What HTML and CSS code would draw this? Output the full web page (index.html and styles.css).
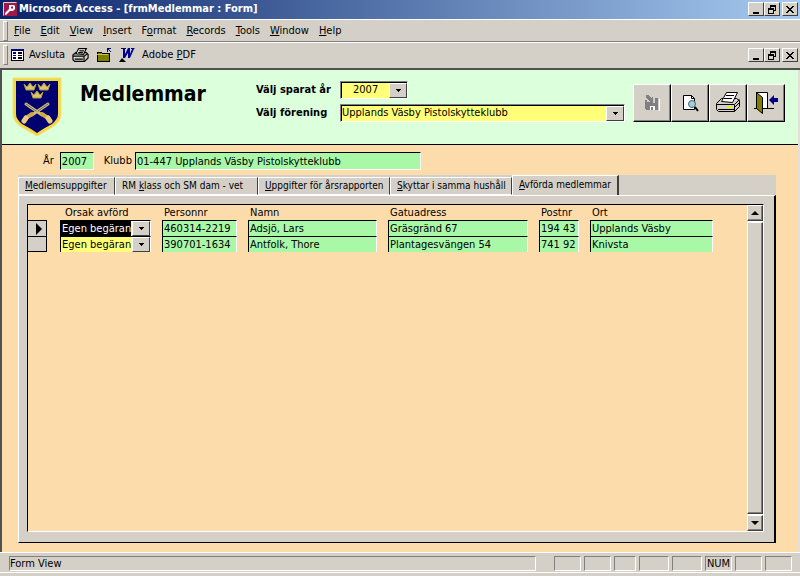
FILE: index.html
```html
<!DOCTYPE html>
<html lang="sv">
<head>
    <meta charset="UTF-8">
    <meta name="viewport" content="width=device-width, initial-scale=1.0">
    <title>Microsoft Access - [frmMedlemmar : Form]</title>
    <link rel="stylesheet" href="styles.css">
</head>
<body>
    <header class="titlebar">
        <svg class="app-icon" width="14" height="14" viewBox="0 0 14 14">
            <rect width="14" height="14" fill="#a01848"/>
            <path d="M.5 13.500V.5h13" fill="none" stroke="#e8c8d4"/>
            <path d="M6 3h5l1 1v3l-2 2H7l-4 4H2v-2l4-4z" fill="#fff"/>
            <path d="M8 4.500h2v2H8z" fill="#a01848"/>
        </svg>
        <span class="title">Microsoft Access - [frmMedlemmar : Form]</span>
        <div class="window-buttons">
            <button type="button" aria-label="Minimize"><svg width="10" height="9" viewBox="0 0 10 9" shape-rendering="crispEdges"><path d="M2 7h6v2H2z"/></svg></button>
            <button type="button" aria-label="Restore"><svg width="10" height="9" viewBox="0 0 10 9" shape-rendering="crispEdges"><path d="M3 0h6v6H7V5h1V2H4v1H3zM1 3h6v6H1zM2 5v3h4V5z" fill-rule="evenodd"/></svg></button>
            <button type="button" class="close" aria-label="Close"><svg width="10" height="9" viewBox="0 0 10 9" shape-rendering="crispEdges"><path d="M1 1h2v1h1v1h2V2h1V1h2v1H8v1H7v1H6v1h1v1h1v1h1v1H7V7H6V6H4v1H3v1H1V7h1V6h1V5h1V4H3V3H2V2H1z"/></svg></button>
        </div>
    </header>

    <nav class="bar menubar">
        <button type="button"><u>F</u>ile</button>
        <button type="button"><u>E</u>dit</button>
        <button type="button"><u>V</u>iew</button>
        <button type="button"><u>I</u>nsert</button>
        <button type="button">F<u>o</u>rmat</button>
        <button type="button"><u>R</u>ecords</button>
        <button type="button"><u>T</u>ools</button>
        <button type="button"><u>W</u>indow</button>
        <button type="button"><u>H</u>elp</button>
    </nav>

    <div class="bar toolbar">
        <button type="button">
            <svg width="13" height="12" viewBox="0 0 13 12" shape-rendering="crispEdges">
                <path d="M0 0h13v12H0z" fill="#000"/><path d="M0 0h13v2H0z" fill="#000080"/><path d="M1 2h11v9H1z" fill="#fff"/>
                <path d="M2 3h3v2H2zM2 6h3v1H2zM2 8h3v2H2z" fill="#000080"/><path d="M7 3h4v2H7zM7 6h4v1H7zM7 8h4v2H7z"/>
            </svg>
            Avsluta
        </button>
        <button type="button" aria-label="Skriv ut">
            <svg width="17" height="14" viewBox="0 0 28 24">
                <path d="M1 12l5-4h18l3 3v6l-6 6H4l-3-3z" fill="#d4d0c8" stroke="#000" stroke-width="2"/>
                <path d="M6 10l5-9h13l-5 10z" fill="#fff" stroke="#000" stroke-width="2"/>
                <path d="M12 5h8M10 8h8M1 14h19l6-4M20 14v8M4 19h14" fill="none" stroke="#000" stroke-width="2"/>
            </svg>
        </button>
        <button type="button" aria-label="Mapp">
            <svg width="16" height="16" viewBox="0 0 16 16" shape-rendering="crispEdges">
                <path d="M1 14V6l1-1h3l1 1h7v8z" fill="#808000" stroke="#000"/>
                <path d="M1 7h11" stroke="#c8c840"/><path d="M11 1h4v1h-2v1h1v1h1v1h-1V4h-1V3h-1v2h-1z" fill="#000080"/>
            </svg>
        </button>
        <button type="button" aria-label="Word">
            <svg width="16" height="16" viewBox="0 0 16 16">
                <path d="M2 1h5v1H6v5l3-6h2v6l2-5h-1V1h4l-1 1-4 9H9V6l-3 5H4V2H2z" fill="#000090"/>
                <path d="M0 15l3-4 4 4z"/>
            </svg>
        </button>
        <button type="button" class="pdf">Adobe <u>P</u>DF</button>
        <div class="window-buttons">
            <button type="button" aria-label="Minimize form"><svg width="10" height="9" viewBox="0 0 10 9" shape-rendering="crispEdges"><path d="M2 7h6v2H2z"/></svg></button>
            <button type="button" aria-label="Restore form"><svg width="10" height="9" viewBox="0 0 10 9" shape-rendering="crispEdges"><path d="M3 0h6v6H7V5h1V2H4v1H3zM1 3h6v6H1zM2 5v3h4V5z" fill-rule="evenodd"/></svg></button>
            <button type="button" class="close" aria-label="Close form"><svg width="10" height="9" viewBox="0 0 10 9" shape-rendering="crispEdges"><path d="M1 1h2v1h1v1h2V2h1V1h2v1H8v1H7v1H6v1h1v1h1v1h1v1H7V7H6V6H4v1H3v1H1V7h1V6h1V5h1V4H3V3H2V2H1z"/></svg></button>
        </div>
    </div>

    <main class="form">
        <section class="form-header">
            <svg class="crest" width="50" height="60" viewBox="0 0 50 60">
                <path d="M1 1h48v36q0 7-7 12l-10 6-7 4-7-4-10-6q-7-5-7-12z" fill="#f4d83c" stroke="#f0e080"/>
                <path d="M4 4h42v33q0 5-6 10l-9 5-6 4-6-4-9-5q-6-5-6-10z" fill="#000070"/>
                <g fill="#dcc46c" stroke="#b09840" stroke-width="1">
                    <path d="M12 7l3 3 3-4 3 4 3-3-2 6h-8z"/>
                    <path d="M26 7l3 3 3-4 3 4 3-3-2 6h-8z"/>
                    <path d="M19 15l3 3 3-4 3 4 3-3-2 6h-8z"/>
                </g>
                <g stroke-linecap="round">
                    <path d="M14 27l16 11M36 27L20 38" stroke="#d0c080" stroke-width="3"/>
                    <path d="M14 27l10 7M36 27l-10 7" stroke="#706838" stroke-width="1"/>
                    <path d="M30 37l6 4M20 37l-6 4" stroke="#d0a848" stroke-width="4"/>
                    <path d="M36 41l2 3M14 41l-2 3" stroke="#e8cc80" stroke-width="5"/>
                </g>
            </svg>
            <h1>Medlemmar</h1>
            <div class="filters">
                <label for="year">Välj sparat år</label>
                <span class="combo combo-year"><select id="year"><option>2007</option></select></span>
                <label for="club">Välj förening</label>
                <span class="combo"><select id="club"><option>Upplands Väsby Pistolskytteklubb</option></select></span>
            </div>
            <div class="actions">
                <button type="button" aria-label="Spara" disabled>
                    <svg width="16" height="16" viewBox="0 0 16 16" shape-rendering="crispEdges">
                        <path d="M15 4v12H3" fill="none" stroke="#fff"/>
                        <path d="M1 5h2v3h8V3h3v12H2l-1-1z" fill="#808080"/>
                        <path d="M2 0h2l4 4V2h1v6H3V7h3L2 3z" fill="#808080"/>
                        <path d="M6 11h5v4H6z" fill="#fff"/><path d="M7 12h2v3H7z" fill="#808080"/>
                    </svg>
                </button>
                <button type="button" aria-label="Förhandsgranska">
                    <svg width="18" height="18" viewBox="0 0 18 18">
                        <path d="M2.500 1.500h8l3 3v11h-11z" fill="#fff" stroke="#000"/><path d="M10.500 1.500v3h3" fill="none" stroke="#000"/>
                        <circle cx="11" cy="10" r="3.500" fill="#a0d0e0" stroke="#506070"/><path d="M14 13l3 4" stroke="#000" stroke-width="2"/>
                    </svg>
                </button>
                <button type="button" aria-label="Skriv ut">
                    <svg width="26" height="24" viewBox="0 0 26 24">
                        <path d="M1.500 12.500l5-5h15l3 2v6l-5 5h-16l-2-2z" fill="#d4d0c8" stroke="#000"/>
                        <path d="M6.500 10.500l5-9h11l-5 10z" fill="#fff" stroke="#000"/>
                        <path d="M11 4.500h8M9 7.500h8M1.500 13.500h18l5-5M19.500 13.500v7M3 18.500h16M20 16l4-4" fill="none" stroke="#000"/>
                        <path d="M12 16h5" stroke="#f0f000" stroke-width="2"/>
                    </svg>
                </button>
                <button type="button" aria-label="Stäng">
                    <svg width="26" height="24" viewBox="0 0 26 24">
                        <path d="M3.500 1.500h11v16h-11z" fill="#fff" stroke="#000"/>
                        <path d="M3.500 1.500l6 5v16l-6-5z" fill="#808000" stroke="#000"/>
                        <path d="M1 17.500h3M10 17.500h11" stroke="#000"/><path d="M16 9l5-5v3h4v4h-4v3z" fill="#000080"/>
                    </svg>
                </button>
            </div>
        </section>

        <section class="detail">
            <div class="club-info">
                <label for="infoYear">År</label>
                <input type="text" id="infoYear" class="field info-year" value="2007" readonly>
                <label for="infoClub">Klubb</label>
                <input type="text" id="infoClub" class="field info-club" value="01-447 Upplands Väsby Pistolskytteklubb" readonly>
            </div>

            <div class="tab-control">
                <div class="tabs" role="tablist">
                    <button type="button" role="tab"><u>M</u>edlemsuppgifter</button>
                    <button type="button" role="tab">RM <u>k</u>lass och SM dam - vet</button>
                    <button type="button" role="tab"><u>U</u>ppgifter för årsrapporten</button>
                    <button type="button" role="tab"><u>S</u>kyttar i samma hushåll</button>
                    <button type="button" role="tab" class="active" aria-selected="true"><u>A</u>vförda medlemmar</button>
                </div>
                <div class="tab-page" role="tabpanel">
                    <div class="subform">
                        <div class="records">
                            <table>
                                <colgroup>
                                    <col class="col-selector"><col class="col-reason"><col class="col-pnr"><col class="col-name">
                                    <col class="col-address"><col class="col-zip"><col class="col-city">
                                </colgroup>
                                <thead>
                                    <tr>
                                        <th></th>
                                        <th class="reason">Orsak avförd</th>
                                        <th>Personnr</th>
                                        <th>Namn</th>
                                        <th>Gatuadress</th>
                                        <th>Postnr</th>
                                        <th>Ort</th>
                                    </tr>
                                </thead>
                                <tbody>
                                    <tr class="current">
                                        <td class="selector"><svg width="6" height="12" viewBox="0 0 6 12"><path d="M0 0l6 6-6 6z"/></svg></td>
                                        <td class="reason"><span class="combo"><select aria-label="Orsak avförd"><option>Egen begäran</option></select></span></td>
                                        <td><input type="text" class="field" aria-label="Personnr" value="460314-2219"></td>
                                        <td><input type="text" class="field" aria-label="Namn" value="Adsjö, Lars"></td>
                                        <td><input type="text" class="field" aria-label="Gatuadress" value="Gräsgränd 67"></td>
                                        <td><input type="text" class="field" aria-label="Postnr" value="194 43"></td>
                                        <td><input type="text" class="field" aria-label="Ort" value="Upplands Väsby"></td>
                                    </tr>
                                    <tr>
                                        <td class="selector"></td>
                                        <td class="reason"><span class="combo"><select aria-label="Orsak avförd"><option>Egen begäran</option></select></span></td>
                                        <td><input type="text" class="field" aria-label="Personnr" value="390701-1634"></td>
                                        <td><input type="text" class="field" aria-label="Namn" value="Antfolk, Thore"></td>
                                        <td><input type="text" class="field" aria-label="Gatuadress" value="Plantagesvängen 54"></td>
                                        <td><input type="text" class="field" aria-label="Postnr" value="741 92"></td>
                                        <td><input type="text" class="field" aria-label="Ort" value="Knivsta"></td>
                                    </tr>
                                </tbody>
                            </table>
                        </div>
                        <div class="scrollbar">
                            <button type="button" aria-label="Upp"><svg width="8" height="4" viewBox="0 0 8 4"><path d="M0 4l4-4 4 4z"/></svg></button>
                            <div class="thumb"></div>
                            <button type="button" aria-label="Ned"><svg width="8" height="4" viewBox="0 0 8 4"><path d="M0 0h8L4 4z"/></svg></button>
                        </div>
                    </div>
                </div>
            </div>
        </section>
    </main>

    <footer class="statusbar">
        <div class="panel message">Form View</div>
        <div class="panel"></div>
        <div class="panel"></div>
        <div class="panel narrow"></div>
        <div class="panel wide"></div>
        <div class="panel wide"></div>
        <div class="panel">NUM</div>
        <div class="panel"></div>
        <div class="panel"></div>
    </footer>
</body>
</html>
```

FILE: styles.css
```css
* {
    box-sizing: border-box;
}

body {
    margin: 0;
    height: 100vh;
    display: flex;
    flex-direction: column;
    background-color: #d4d0c8;
    color: #000;
    font-family: "DejaVu Sans Condensed", "Noto Sans", sans-serif;
    font-size: 11px;
    line-height: 14px;
}

button, input, select {
    font: inherit;
    color: inherit;
    margin: 0;
    padding: 0;
    border: none;
    border-radius: 0;
}

svg {
    display: block;
    flex: none;
}

/* Title bar */
.titlebar {
    display: flex;
    align-items: center;
    height: 19px;
    padding: 0 2px 1px 3px;
    background: linear-gradient(to right, #0a246a, #a6caf0);
    color: #fff;
    font-weight: bold;
}

.title {
    margin-left: 2px;
    white-space: nowrap;
}

.window-buttons {
    display: flex;
    margin-left: auto;
}

.window-buttons button {
    display: flex;
    align-items: center;
    justify-content: center;
    width: 16px;
    height: 14px;
    background-color: #d4d0c8;
    border: 1px solid;
    border-color: #fff #404040 #404040 #fff;
}

.window-buttons .close {
    margin-left: 2px;
}

/* Menu and toolbar */
.bar {
    display: flex;
    align-items: center;
    border-top: 1px solid #fff;
    border-bottom: 1px solid #808080;
    padding: 0 2px 0 3px;
}

.bar::before {
    content: "";
    width: 3px;
    height: 18px;
    border: 1px solid;
    border-color: #fff #808080 #808080 #fff;
}

.bar > button {
    background: none;
}

.menubar {
    height: 23px;
}

.menubar > button {
    margin-left: 6px;
    padding: 0 2px;
}

.menubar > button:first-child {
    margin-left: 4px;
}

.toolbar {
    height: 28px;
    gap: 7px;
    padding-bottom: 1px;
    border-bottom: 2px solid #505050;
}

.toolbar > button:first-of-type {
    display: flex;
    align-items: center;
    margin-left: -4px;
    gap: 5px;
}

/* Form header */
.form {
    flex: 1;
    display: flex;
    flex-direction: column;
    min-height: 0;
    border-left: 2px solid #505050;
    border-right: 2px solid #e4e0d8;
    background-color: #fddcac;
}

.form-header {
    display: flex;
    align-items: flex-start;
    height: 75px;
    padding: 7px 13px 0 10px;
    background-color: #dcffdc;
    border-bottom: 1px solid #000;
}

h1 {
    width: 176px;
    margin: 4px 0 0 18px;
    font-size: 21px;
    line-height: 26px;
}

.filters {
    flex: 1;
    display: grid;
    grid-template-columns: 84px 1fr;
    row-gap: 5px;
    align-items: center;
    margin-top: 4px;
}

.filters label {
    font-weight: bold;
}

.combo {
    position: relative;
    display: block;
    height: 18px;
    background-color: #ffff78;
    border: 1px solid;
    border-color: #808080 #fff #fff #808080;
    box-shadow: inset 1px 1px #000;
}

.combo select {
    appearance: none;
    display: block;
    width: 100%;
    height: 100%;
    padding-left: 1px;
    background: none;
}

/* Drop-down arrow, drawn over the select */
.combo::after {
    content: "";
    position: absolute;
    top: 1px;
    right: 0;
    bottom: 0;
    width: 16px;
    border: 1px solid;
    border-color: #fff #404040 #404040 #fff;
    background: #d4d0c8 conic-gradient(from 315deg at 50% 100%, #000 90deg, transparent 0) center / 5px 3px no-repeat;
    pointer-events: none;
}

.combo-year {
    width: 68px;
}

.combo-year select {
    padding-left: 12px;
}

.actions {
    display: flex;
    margin: 7px 0 0 8px;
}

.actions button {
    display: flex;
    align-items: center;
    justify-content: center;
    width: 38px;
    height: 38px;
    background-color: #d4d0c8;
    border: 1px solid;
    border-color: #fff #000 #000 #fff;
    box-shadow: inset -1px -1px #808080;
}

/* Club info */
.detail {
    flex: 1;
    display: flex;
    flex-direction: column;
    min-height: 0;
    padding: 7px 22px 9px 16px;
}

.club-info {
    display: flex;
    align-items: center;
    padding-left: 25px;
}

.field {
    display: block;
    width: 100%;
    height: 18px;
    padding-left: 1px;
    background-color: #a8f8a8;
    border: 1px solid;
    border-color: #000 #fff #fff #000;
}

.info-year {
    width: 34px;
    margin: 0 10px 0 6px;
}

.info-club {
    width: 286px;
    margin-left: 3px;
}

/* Tabs */
.tab-control {
    flex: 1;
    display: flex;
    flex-direction: column;
    min-height: 0;
    margin-top: 5px;
}

.tabs {
    display: grid;
    grid-template-columns: 97px 143px 132px 122px 107px;
    align-items: end;
    height: 20px;
    background-color: #d4d0c8;
    font-size: 10px;
}

.tabs button {
    height: 18px;
    padding: 0 0 0 6px;
    background: none;
    border: 1px solid;
    border-color: #fff #404040 #fff #fff;
    text-align: left;
    white-space: nowrap;
}

.tabs .active {
    height: 20px;
    padding-bottom: 2px;
    border-bottom: none;
    border-right: 2px solid #404040;
}

.tab-page {
    flex: 1;
    display: flex;
    min-height: 0;
    padding: 8px 10px 10px 8px;
    background-color: #d4d0c8;
    border: 1px solid;
    border-color: #fff #000 #000 #fff;
    border-right-width: 2px;
}

.subform {
    flex: 1;
    display: flex;
    min-width: 0;
    background-color: #fddcac;
    border: 1px solid;
    border-color: #000 #fff #fff #000;
}

.records {
    flex: 1;
    min-width: 0;
    overflow: hidden;
}

table {
    table-layout: fixed;
    width: 685px;
    border-spacing: 0;
}

.col-selector { width: 19px; }
.col-reason { width: 104px; }
.col-pnr { width: 86px; }
.col-name { width: 140px; }
.col-address { width: 151px; }
.col-zip { width: 51px; }
.col-city { width: 134px; }

th {
    height: 15px;
    padding: 0 0 0 13px;
    text-align: left;
    font-weight: normal;
}

th.reason {
    padding-left: 18px;
}

td {
    padding: 0 0 0 11px;
}

td.reason {
    padding-left: 13px;
}

td .field, td .combo {
    height: 16px;
    border-bottom: none;
}

td .combo {
    border-color: #000;
    border-right-color: #fff;
    box-shadow: none;
}

td .combo::after {
    top: 0;
}

.current .combo select {
    width: 70px;
    background-color: #000;
    color: #fff;
}

.selector {
    height: 16px;
    padding: 0 0 0 8px;
    background-color: #d4d0c8;
    border-top: 1px solid #000;
    border-right: 1px solid #000;
}

tr:last-child .selector {
    border-bottom: 1px solid #000;
}

/* Scroll bar */
.scrollbar {
    display: flex;
    flex-direction: column;
    gap: 1px;
    width: 16px;
    background-color: #fff;
}

.scrollbar button {
    display: flex;
    align-items: center;
    justify-content: center;
    height: 16px;
}

.scrollbar button, .thumb {
    background-color: #d4d0c8;
    border: 1px solid;
    border-color: #fff #404040 #404040 #fff;
    box-shadow: inset -1px -1px #808080;
}

.thumb {
    flex: 1;
}

/* Status bar */
.statusbar {
    display: flex;
    gap: 3px;
    height: 24px;
    padding: 3px 8px 5px 9px;
    border-top: 1px solid #fff;
    box-shadow: inset 0 -3px #d4d0c8, inset 0 -4px #fff;
}

.panel {
    width: 27px;
    border: 1px solid;
    border-color: #808080 #fff #fff #808080;
    text-align: center;
}

.narrow {
    width: 22px;
}

.wide {
    width: 30px;
}

.message {
    flex: 1;
    margin-right: 15px;
    text-align: left;
}
```
